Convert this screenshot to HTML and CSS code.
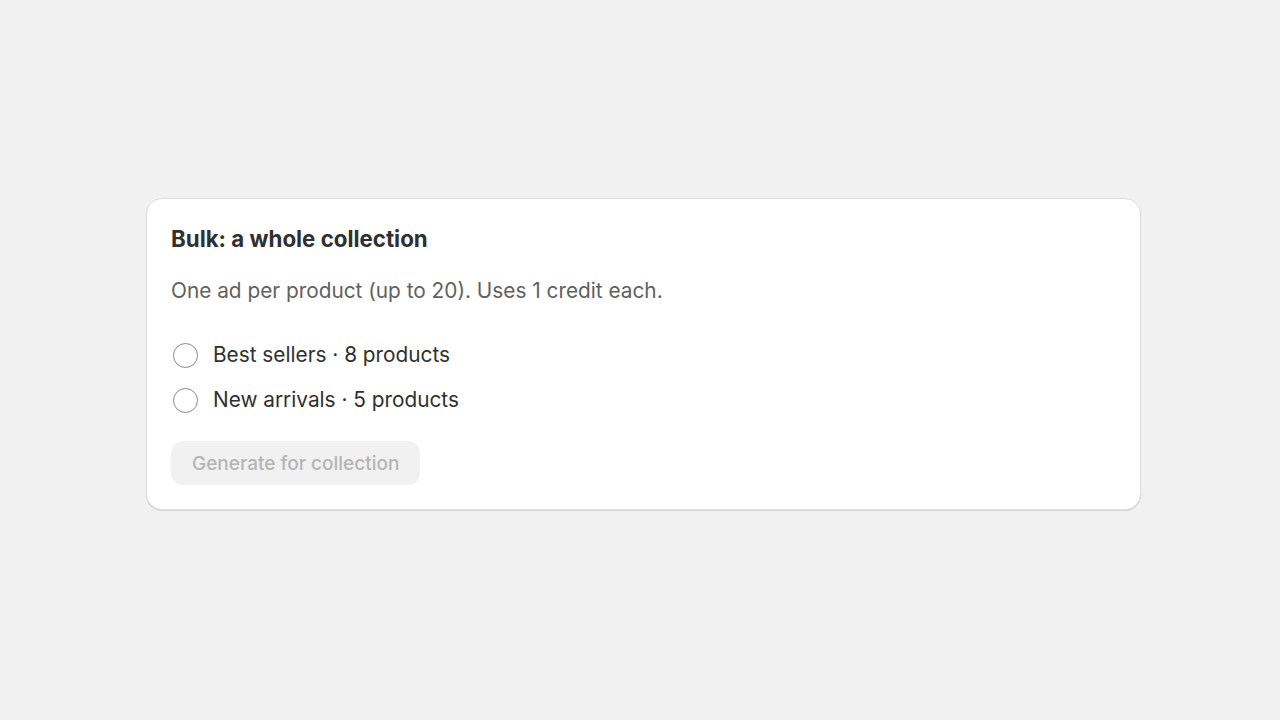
FILE: index.html
```html
<!DOCTYPE html>
<html lang="en">
<head>
    <meta charset="UTF-8">
    <meta name="viewport" content="width=device-width, initial-scale=1.0">
    <title>Bulk: a whole collection</title>
    <link rel="stylesheet" href="styles.css">
</head>
<body>
    <div class="page">
        <div class="card">
            <h2 class="card_title">Bulk: a whole collection</h2>
            <p class="card_text">One ad per product (up to 20). Uses 1 credit each.</p>
            <div class="choices">
                <label class="choice">
                    <input type="radio" name="collection">
                    <span class="dot"></span>
                    <span>Best sellers · 8 products</span>
                </label>
                <label class="choice">
                    <input type="radio" name="collection">
                    <span class="dot"></span>
                    <span>New arrivals · 5 products</span>
                </label>
            </div>
            <div class="actions">
                <button class="button" disabled>Generate for collection</button>
            </div>
        </div>
    </div>
</body>
</html>
```

FILE: styles.css
```css
body{
    margin: 0;
    background-color: #f1f1f1;
    font-family: Inter, "Noto Sans", sans-serif;
    color: #303030;
}
.page{
    height: 720px;
    padding: 198px 0 0 146px;
    box-sizing: border-box;
}
.card{
    width: 995px;
    box-sizing: border-box;
    padding: 26px 24px 24px;
    background-color: #fff;
    border: 1px solid #dedede;
    border-radius: 16px;
    box-shadow: 0 1px 1px rgba(0, 0, 0, 0.12);
}
.card_title{
    margin: 0 0 24px;
    font-size: 22.3px;
    line-height: 28px;
    font-weight: 650;
}
.card_text{
    margin: 0 0 36px;
    font-size: 20.8px;
    line-height: 28px;
    color: #616161;
}
.choices{
    display: flex;
    flex-direction: column;
    gap: 17px;
}
.choice{
    display: flex;
    align-items: center;
    gap: 15px;
    font-size: 20.8px;
    line-height: 28px;
    cursor: pointer;
}
.choice input{
    display: none;
}
.dot{
    width: 25px;
    height: 25px;
    margin-left: 2px;
    border: 1px solid #8a8a8a;
    border-radius: 50%;
    box-sizing: border-box;
}
.actions{
    margin-top: 27px;
}
.button{
    height: 44px;
    padding: 0 21px;
    border: none;
    border-radius: 12px;
    background-color: #f1f1f1;
    color: #b5b5b5;
    font-family: inherit;
    font-size: 19px;
    font-weight: 550;
}
```
